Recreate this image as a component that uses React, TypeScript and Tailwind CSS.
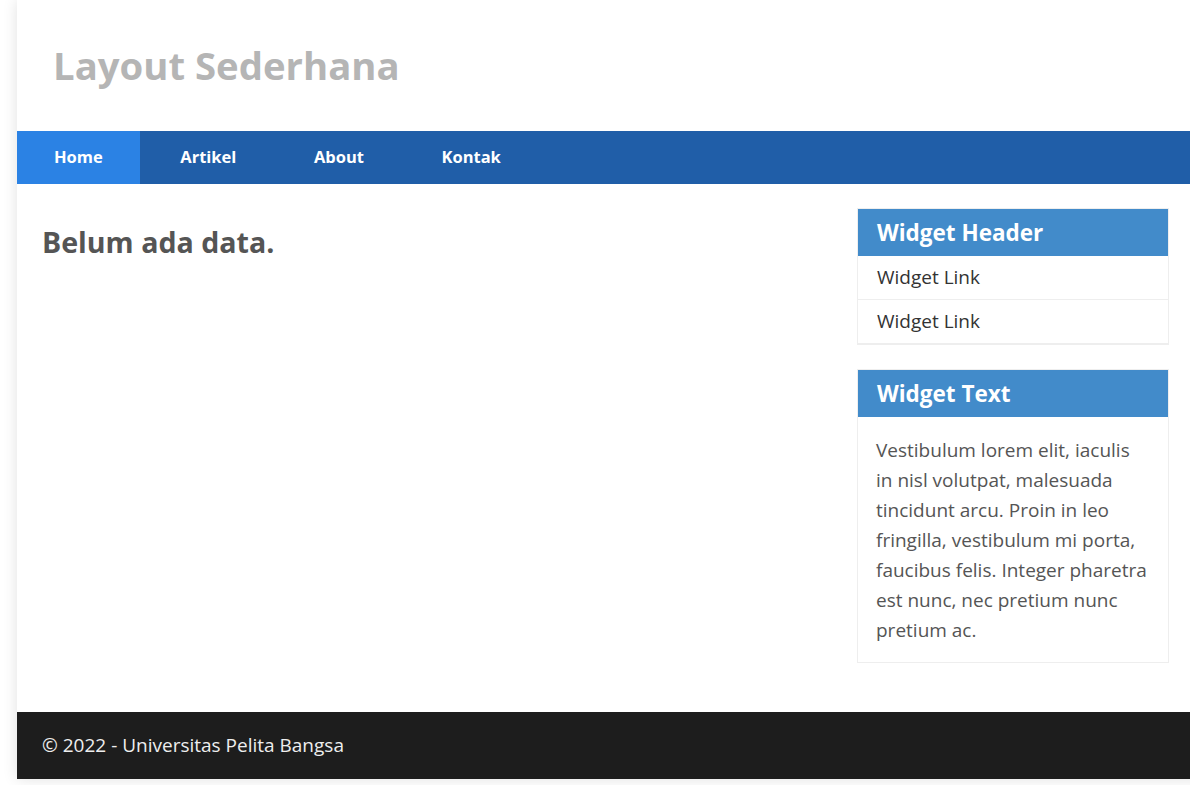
import React from "react";

export default function App() {
  const nav = ["Home", "Artikel", "About", "Kontak"];
  return (
    <div className="w-[1190px] h-[785px] overflow-hidden bg-white font-['Open_Sans',sans-serif]">
      <div className="ml-[17px] w-[1200px] bg-white shadow-[0_0_14px_rgba(0,0,0,0.12)]">
        <header className="h-[131px] flex items-center px-[36px]">
          <h1 className="text-[38.3px] font-bold text-[#b5b5b5] leading-none">Layout Sederhana</h1>
        </header>
        <nav className="h-[53px] bg-[#205ea8] flex items-stretch">
          {nav.map((n, i) => (
            <a
              key={n}
              className={`flex items-center px-[37px] mr-[3.5px] text-[16.5px] font-bold text-white ${i === 0 ? "bg-[#2b82e4]" : ""}`}
            >
              {n}
            </a>
          ))}
        </nav>
        <div className="flex w-[1173px]">
          <main className="flex-1 pl-[25px] pt-[38px]">
            <h2 className="text-[28.6px] font-bold text-[#555] leading-[40px]">Belum ada data.</h2>
          </main>
          <aside className="w-[312px] mr-[21px] pt-[24px] pb-[49px] flex flex-col gap-[24px]">
            <div className="border border-[#eee] border-b-[2px]">
              <h3 className="h-[47px] bg-[#428bca] text-white text-[22.5px] font-bold px-[19px] flex items-center">Widget Header</h3>
              <div className="h-[44px] flex items-center px-[19px] border-b border-[#eee] text-[19px] text-[#333]">Widget Link</div>
              <div className="h-[43px] flex items-center px-[19px] text-[19px] text-[#333]">Widget Link</div>
            </div>
            <div className="border border-[#eee]">
              <h3 className="h-[47px] bg-[#428bca] text-white text-[22.5px] font-bold px-[19px] flex items-center">Widget Text</h3>
              <p className="px-[18px] pt-[18px] pb-[17px] text-[19px] leading-[30px] text-[#555]">
                Vestibulum lorem elit, iaculis in nisl volutpat, malesuada tincidunt arcu. Proin in leo fringilla, vestibulum mi porta, faucibus felis. Integer pharetra est nunc, nec pretium nunc pretium ac.
              </p>
            </div>
          </aside>
        </div>
        <footer className="h-[67px] bg-[#1d1d1d] flex items-center px-[25px] text-[19px] text-[#eee]">
          © 2022 - Universitas Pelita Bangsa
        </footer>
      </div>
    </div>
  );
}
